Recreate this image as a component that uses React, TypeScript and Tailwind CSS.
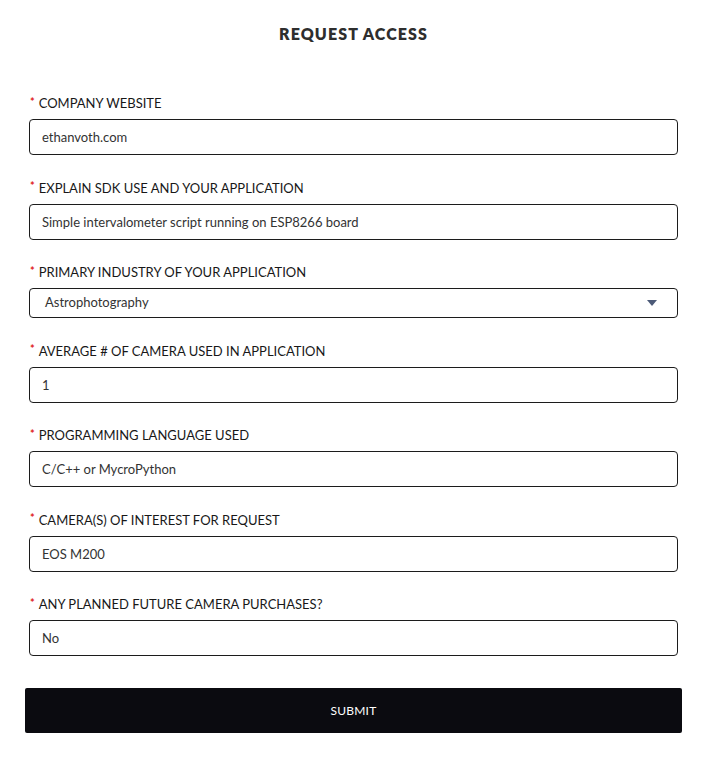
const fields = [
    { label: "COMPANY WEBSITE", value: "ethanvoth.com" },
    { label: "EXPLAIN SDK USE AND YOUR APPLICATION", value: "Simple intervalometer script running on ESP8266 board" },
    { label: "PRIMARY INDUSTRY OF YOUR APPLICATION", value: "Astrophotography", select: true },
    { label: "AVERAGE # OF CAMERA USED IN APPLICATION", value: "1" },
    { label: "PROGRAMMING LANGUAGE USED", value: "C/C++ or MycroPython" },
    { label: "CAMERA(S) OF INTEREST FOR REQUEST", value: "EOS M200" },
    { label: "ANY PLANNED FUTURE CAMERA PURCHASES?", value: "No" },
];

const App = () => {
    return (
        <div className="min-h-screen bg-white pl-[25px] pr-[29px] pt-[26px] font-['Lato','Liberation_Sans',sans-serif] text-[#222]">
            <h2 className="text-center text-[16px] leading-[16px] font-extrabold tracking-[1.1px] text-[#2e2e2e]">
                REQUEST ACCESS
            </h2>
            <form className="mt-[53px]" onSubmit={(e) => e.preventDefault()}>
                {fields.map((f) => (
                    <div key={f.label} className="px-[4px] mb-[24.5px]">
                        <label className="flex items-center text-[13px] leading-[16px] text-[#181818]">
                            <span className="text-[#e02020] text-[11px] font-bold mr-[4px] ml-[1px] -mt-[3px]">*</span>
                            {f.label}
                        </label>
                        {f.select ? (
                            <div className="mt-[8px] h-[30px] flex items-center justify-between border border-[#1c1c1c] rounded-[4px] pl-[15px] pr-[20px]">
                                <span className="text-[13px] text-[#333]">{f.value}</span>
                                <svg width="10" height="6" viewBox="0 0 10 6">
                                    <path d="M0 0 L10 0 L5 6 Z" fill="#4c5a78" />
                                </svg>
                            </div>
                        ) : (
                            <input
                                readOnly
                                value={f.value}
                                className="mt-[8px] block w-full h-[36px] border border-[#1c1c1c] rounded-[4px] px-[12px] text-[13px] text-[#333] outline-none"
                            />
                        )}
                    </div>
                ))}
                <button
                    type="submit"
                    className="mt-[7.5px] w-full h-[45px] bg-[#0b0b10] rounded-[2px] text-white text-[12px] tracking-[0.2px]"
                >
                    SUBMIT
                </button>
            </form>
        </div>
    );
};

export default App;
